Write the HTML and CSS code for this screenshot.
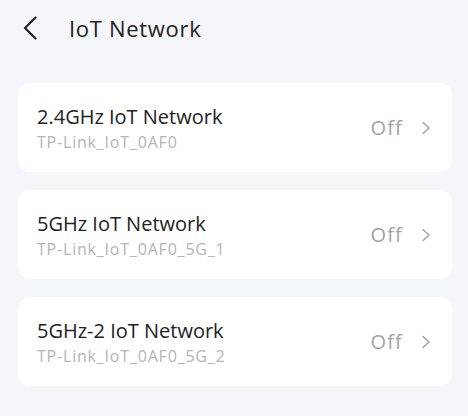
FILE: index.html
```html
<!DOCTYPE html>
<html lang="en">
<head>
    <meta charset="UTF-8">
    <meta name="viewport" content="width=device-width, initial-scale=1.0">
    <title>IoT Network</title>
    <link rel="stylesheet" href="styles.css">
</head>
<body>
    <div class="header">
        <svg class="back" width="14" height="24" viewBox="0 0 14 24">
            <path d="M12.5 1.5 L2 12 L12.5 22.5" fill="none" stroke="#222" stroke-width="2.2" stroke-linecap="round" stroke-linejoin="round"/>
        </svg>
        <h1>IoT Network</h1>
    </div>

    <div class="lista">
        <div class="card">
            <div class="info">
                <div class="nome">2.4GHz IoT Network</div>
                <div class="ssid">TP-Link_IoT_0AF0</div>
            </div>
            <div class="estado">
                <span>Off</span>
                <svg width="10" height="14" viewBox="0 0 10 14"><path d="M2 1.5 L8 7 L2 12.5" fill="none" stroke="#a3a3a3" stroke-width="1.5" stroke-linecap="round" stroke-linejoin="round"/></svg>
            </div>
        </div>
        <div class="card">
            <div class="info">
                <div class="nome">5GHz IoT Network</div>
                <div class="ssid">TP-Link_IoT_0AF0_5G_1</div>
            </div>
            <div class="estado">
                <span>Off</span>
                <svg width="10" height="14" viewBox="0 0 10 14"><path d="M2 1.5 L8 7 L2 12.5" fill="none" stroke="#a3a3a3" stroke-width="1.5" stroke-linecap="round" stroke-linejoin="round"/></svg>
            </div>
        </div>
        <div class="card">
            <div class="info">
                <div class="nome">5GHz-2 IoT Network</div>
                <div class="ssid">TP-Link_IoT_0AF0_5G_2</div>
            </div>
            <div class="estado">
                <span>Off</span>
                <svg width="10" height="14" viewBox="0 0 10 14"><path d="M2 1.5 L8 7 L2 12.5" fill="none" stroke="#a3a3a3" stroke-width="1.5" stroke-linecap="round" stroke-linejoin="round"/></svg>
            </div>
        </div>
    </div>
</body>
</html>
```

FILE: styles.css
```css
body {
    font-family: "Open Sans", Roboto, sans-serif;
    background-color: #f5f6fa;
    color: #222;
    margin: 0;
    padding: 0;
}
.header {
    display: flex;
    align-items: center;
    height: 56px;
    padding-left: 23px;
}
.header h1 {
    font-size: 22px;
    font-weight: 400;
    letter-spacing: 0.7px;
    margin: 0 0 0 32px;
    color: #222;
}
.lista {
    display: flex;
    flex-direction: column;
    gap: 18px;
    padding: 27px 16px 0 18px;
}
.card {
    background-color: #fff;
    border-radius: 12px;
    height: 89px;
    display: flex;
    align-items: center;
    justify-content: space-between;
    padding: 0 21px 0 19px;
}
.nome {
    font-size: 20px;
    line-height: 26px;
    color: #222;
}
.ssid {
    font-size: 16px;
    line-height: 20px;
    letter-spacing: 0.8px;
    color: #b5b5b5;
    margin-top: 2px;
}
.estado {
    display: flex;
    align-items: center;
    gap: 18px;
}
.estado span {
    font-size: 20px;
    letter-spacing: 1.2px;
    color: #a3a3a3;
}
.estado svg {
    display: block;
}
```
